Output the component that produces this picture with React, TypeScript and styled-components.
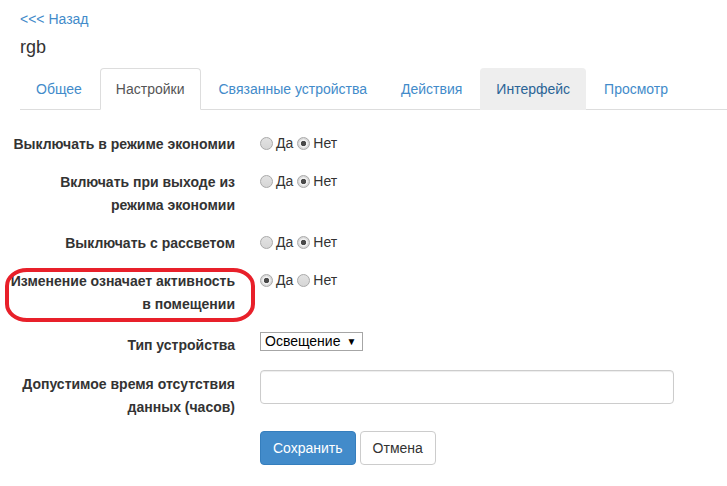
import React from 'react';
import styled, { createGlobalStyle } from 'styled-components';

const GlobalStyle = createGlobalStyle`
  * {
    box-sizing: border-box;
  }
  body {
    margin: 0;
    background: #fff;
    font-family: "Liberation Sans", Arial, Helvetica, sans-serif;
    font-size: 14px;
    line-height: 20px;
    color: #333;
  }
`;

const Page = styled.div`
  width: 727px;
  height: 486px;
  overflow: hidden;
`;

const Header = styled.header`
  padding: 9px 0 0 20px;
`;

const BackLink = styled.a`
  display: block;
  color: #428bca;
  text-decoration: none;
  line-height: 20px;
`;

const Title = styled.h3`
  margin: 8px 0 11px;
  font-size: 18px;
  font-weight: normal;
  line-height: 20px;
  color: #333;
`;

const TabBar = styled.ul`
  display: flex;
  margin: 0;
  padding: 0;
  list-style: none;
  border-bottom: 1px solid #ddd;
`;

type TabVariant = 'normal' | 'active' | 'hover';

const Tab = styled.li<{ $variant: TabVariant }>`
  margin: 0 2px -1px 0;
  padding: 10px 15px;
  line-height: 20px;
  border: 1px solid
    ${(p) => (p.$variant === 'active' ? '#ddd' : p.$variant === 'hover' ? '#eee' : 'transparent')};
  border-bottom-color: ${(p) => (p.$variant === 'active' ? '#fff' : 'transparent')};
  border-radius: 4px 4px 0 0;
  background: ${(p) => (p.$variant === 'active' ? '#fff' : p.$variant === 'hover' ? '#eee' : 'transparent')};
  color: ${(p) => (p.$variant === 'active' ? '#555' : p.$variant === 'hover' ? '#2a6496' : '#428bca')};
  white-space: nowrap;
`;

const Form = styled.form`
  margin-top: 23px;
`;

const FormRow = styled.div<{ $mb?: number }>`
  position: relative;
  display: flex;
  align-items: flex-start;
  margin-bottom: ${(p) => (p.$mb ?? 15)}px;
`;

const Label = styled.label<{ $pt?: number }>`
  flex: 0 0 250px;
  padding: ${(p) => p.$pt ?? 0}px 15px 0 0;
  text-align: right;
  font-weight: bold;
  line-height: 23px;
  color: #333;
  white-space: nowrap;
`;

const Control = styled.div`
  margin-left: 10px;
  flex: 0 0 auto;
`;

const RadioGroup = styled.div`
  display: flex;
  align-items: center;
  margin-top: -1px;
  line-height: 23px;
`;

const RadioOption = styled.span`
  display: inline-flex;
  align-items: center;
  margin-right: 4px;
  color: #333;
`;

const RadioDot = styled.span<{ $checked?: boolean }>`
  display: inline-block;
  width: 13px;
  height: 13px;
  margin-right: 3px;
  border-radius: 50%;
  border: 1px solid #a9a9a9;
  background: ${(p) =>
    p.$checked
      ? 'radial-gradient(circle, #4a4a4a 0 2.4px, #f2f2f2 3px 3.8px, #dadada 4.4px)'
      : 'linear-gradient(#e2e2e2, #d6d6d6)'};
`;

const SelectBox = styled.div`
  display: inline-flex;
  align-items: center;
  gap: 6px;
  height: 19px;
  padding: 0 6px 0 4px;
  border: 1px solid #a6a6a6;
  background: #fff;
  line-height: 17px;
  color: #000;
`;

const SelectArrow = styled.span`
  font-size: 10px;
  line-height: 17px;
  color: #000;
`;

const TextInput = styled.input`
  display: block;
  width: 414px;
  height: 34px;
  padding: 6px 12px;
  border: 1px solid #ccc;
  border-radius: 4px;
  box-shadow: inset 0 1px 1px rgba(0, 0, 0, 0.075);
  font: inherit;
  outline: none;
`;

const Actions = styled.div`
  display: flex;
  gap: 4px;
  margin-left: 260px;
`;

const Button = styled.button<{ $primary?: boolean }>`
  height: 34px;
  padding: 6px 12px;
  border: 1px solid ${(p) => (p.$primary ? '#357ebd' : '#ccc')};
  border-radius: 4px;
  background: ${(p) => (p.$primary ? '#428bca' : '#fff')};
  color: ${(p) => (p.$primary ? '#fff' : '#333')};
  font: inherit;
  line-height: 20px;
  cursor: pointer;
`;

const Annotation = styled.div`
  position: absolute;
  left: 5px;
  top: -2px;
  width: 250px;
  height: 54px;
  border: 4px solid #e8202a;
  border-radius: 22px / 18px;
  pointer-events: none;
`;

const tabs: { title: string; variant: TabVariant }[] = [
  { title: 'Общее', variant: 'normal' },
  { title: 'Настройки', variant: 'active' },
  { title: 'Связанные устройства', variant: 'normal' },
  { title: 'Действия', variant: 'normal' },
  { title: 'Интерфейс', variant: 'hover' },
  { title: 'Просмотр', variant: 'normal' },
];

const YesNo = ({ yes }: { yes: boolean }) => (
  <RadioGroup>
    <RadioOption>
      <RadioDot $checked={yes} />
      Да
    </RadioOption>
    <RadioOption>
      <RadioDot $checked={!yes} />
      Нет
    </RadioOption>
  </RadioGroup>
);

export default function App() {
  return (
    <Page>
      <GlobalStyle />
      <Header>
        <BackLink href="#">&lt;&lt;&lt; Назад</BackLink>
        <Title>rgb</Title>
        <TabBar>
          {tabs.map((t) => (
            <Tab key={t.title} $variant={t.variant}>
              {t.title}
            </Tab>
          ))}
        </TabBar>
      </Header>

      <Form onSubmit={(e) => e.preventDefault()}>
        <FormRow>
          <Label>Выключать в режиме экономии</Label>
          <Control>
            <YesNo yes={false} />
          </Control>
        </FormRow>

        <FormRow>
          <Label>
            Включать при выходе из
            <br />
            режима экономии
          </Label>
          <Control>
            <YesNo yes={false} />
          </Control>
        </FormRow>

        <FormRow>
          <Label>Выключать с рассветом</Label>
          <Control>
            <YesNo yes={false} />
          </Control>
        </FormRow>

        <FormRow>
          <Label>
            Изменение означает активность
            <br />
            в помещении
          </Label>
          <Control>
            <YesNo yes={true} />
          </Control>
          <Annotation />
        </FormRow>

        <FormRow $mb={13}>
          <Label $pt={3}>Тип устройства</Label>
          <Control>
            <SelectBox>
              Освещение
              <SelectArrow>▼</SelectArrow>
            </SelectBox>
          </Control>
        </FormRow>

        <FormRow $mb={12}>
          <Label $pt={3}>
            Допустимое время отсутствия
            <br />
            данных (часов)
          </Label>
          <Control>
            <TextInput type="text" />
          </Control>
        </FormRow>

        <Actions>
          <Button type="submit" $primary>
            Сохранить
          </Button>
          <Button type="button">Отмена</Button>
        </Actions>
      </Form>
    </Page>
  );
}
